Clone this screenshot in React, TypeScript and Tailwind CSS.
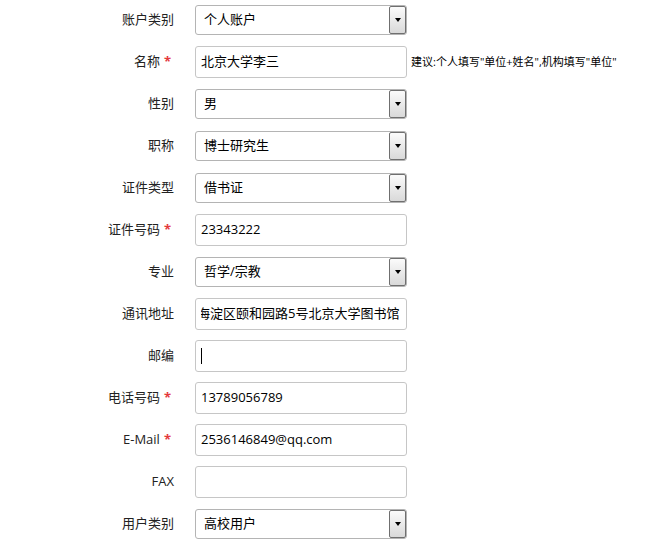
import React from "react";

type Row = {
  label: string;
  required?: boolean;
  kind: "select" | "input";
  value?: string;
  hint?: string;
  caret?: boolean;
  clipStart?: boolean;
};

const rows: Row[] = [
  { label: "账户类别", kind: "select", value: "个人账户" },
  {
    label: "名称",
    required: true,
    kind: "input",
    value: "北京大学李三",
    hint: "建议:个人填写\"单位+姓名\",机构填写\"单位\"",
  },
  { label: "性别", kind: "select", value: "男" },
  { label: "职称", kind: "select", value: "博士研究生" },
  { label: "证件类型", kind: "select", value: "借书证" },
  { label: "证件号码", required: true, kind: "input", value: "23343222" },
  { label: "专业", kind: "select", value: "哲学/宗教" },
  { label: "通讯地址", kind: "input", value: "海淀区颐和园路5号北京大学图书馆", clipStart: true },
  { label: "邮编", kind: "input", caret: true },
  { label: "电话号码", required: true, kind: "input", value: "13789056789" },
  { label: "E-Mail", required: true, kind: "input", value: "2536146849@qq.com" },
  { label: "FAX", kind: "input" },
  { label: "用户类别", kind: "select", value: "高校用户" },
];

const SelectBox = ({ value }: { value?: string }) => (
  <div className="flex h-[30px] w-[212px] items-stretch rounded-[3px] border border-[#b4b4b4] bg-white">
    <div className="flex flex-1 items-center pl-[8px] text-[13px] text-black">{value}</div>
    <div className="flex w-[17px] items-center justify-center rounded-[2px] border border-[#6f6f6f] bg-gradient-to-b from-[#fbfbfb] to-[#d9d9d9]">
      <div className="h-0 w-0 border-x-[3.5px] border-t-[4px] border-x-transparent border-t-black" />
    </div>
  </div>
);

const InputBox = ({ value, caret, clipStart }: { value?: string; caret?: boolean; clipStart?: boolean }) => (
  <div className="flex h-8 w-[212px] items-center rounded-[3px] border border-[#c6c6c6] bg-white px-[5px] text-[13px] text-black">
    {clipStart ? (
      <div className="w-full overflow-hidden whitespace-nowrap">
        <span className="-ml-[4px]">{value}</span>
      </div>
    ) : (
      <span className="whitespace-nowrap">{value}</span>
    )}
    {caret && <div className="h-[16px] w-px bg-black" />}
  </div>
);

export default function App() {
  return (
    <div className="h-[541px] w-[657px] overflow-hidden bg-white font-['Open_Sans','Noto_Sans_CJK_SC',sans-serif]">
      <div className="flex flex-col gap-[10px] pt-1">
        {rows.map((r) => (
          <div key={r.label} className="flex h-8 items-center">
            <div className="w-[174px] text-right text-[13px] text-[#222]">
              {r.label}
              {r.required && <span className="ml-[4px] mr-[3px] font-bold text-[#e4393c]">*</span>}
            </div>
            <div className="ml-[21px]">
              {r.kind === "select" ? (
                <SelectBox value={r.value} />
              ) : (
                <InputBox value={r.value} caret={r.caret} clipStart={r.clipStart} />
              )}
            </div>
            {r.hint && <div className="ml-[4px] whitespace-nowrap text-[11px] text-black">{r.hint}</div>}
          </div>
        ))}
      </div>
    </div>
  );
}
